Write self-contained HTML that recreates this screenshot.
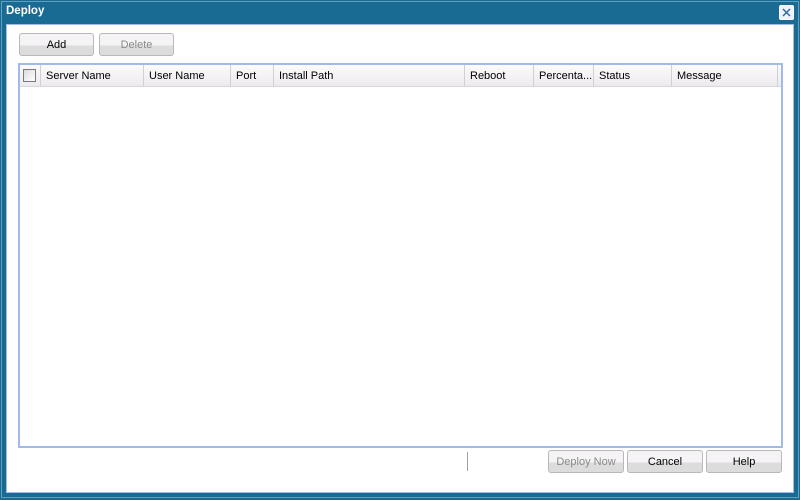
<!DOCTYPE html>
<html><head><style>
*{margin:0;padding:0;box-sizing:border-box}
body{width:800px;height:500px;background:#1a6b93;font-family:"Liberation Sans",sans-serif;font-size:11px;position:relative;overflow:hidden}
.outer{position:absolute;left:1px;top:1px;width:798px;height:497px;border:1px solid #5f9fc0}
.title{position:absolute;left:6px;top:5px;color:#fff;font-weight:bold;font-size:11.5px}
.close{position:absolute;left:779px;top:5px;width:15px;height:15px;background:#eef3fb;border:1px solid #fff;border-radius:2px}
.content{position:absolute;left:6px;top:24px;width:788px;height:469px;background:#fff;border:1px solid #9ebbea}
.btn{position:absolute;height:23px;border:1px solid #b8b8b8;border-radius:3px;background:linear-gradient(#f5f3f5 0 55%,#dcdcdc 55%);text-align:center;line-height:22px;color:#000}
.dis{color:#8a8a8a}
.grid{position:absolute;left:18px;top:63px;width:765px;height:385px;border:2px solid #9ebbea;background:#fff}
.hdr{position:absolute;left:0;top:0;height:22px;width:761px;background:linear-gradient(#fdfbfd,#eceaee);border-bottom:1px solid #d8d8d8}
.col{position:absolute;top:0;height:21px;border-right:1px solid #d0d0d0;line-height:22px;padding-left:5px;white-space:nowrap;overflow:hidden}
.cb{position:absolute;left:3px;top:4px;width:13px;height:13px;border:1px solid #7a7a7a;background:linear-gradient(135deg,#dcdcdc,#fff)}
</style></head><body>
<div class="outer"></div>
<div class="title">Deploy</div>
<div class="close"><svg width="13" height="13" viewBox="0 0 13 13"><path d="M3 3L10 10M10 3L3 10" stroke="#2a63a8" stroke-width="1.4"/></svg></div>
<div class="content"></div>
<div class="btn" style="left:19px;top:33px;width:75px">Add</div>
<div class="btn dis" style="left:99px;top:33px;width:75px">Delete</div>
<div class="grid"><div class="hdr">
<div class="col" style="left:0;width:21px"><div class="cb"></div></div>
<div class="col" style="left:21px;width:103px">Server Name</div>
<div class="col" style="left:124px;width:87px">User Name</div>
<div class="col" style="left:211px;width:43px">Port</div>
<div class="col" style="left:254px;width:191px">Install Path</div>
<div class="col" style="left:445px;width:69px">Reboot</div>
<div class="col" style="left:514px;width:60px">Percenta...</div>
<div class="col" style="left:574px;width:78px">Status</div>
<div class="col" style="left:652px;width:106px">Message</div>
</div></div>
<div style="position:absolute;left:467px;top:452px;width:1px;height:19px;background:#a0a0a0"></div>
<div class="btn dis" style="left:548px;top:450px;width:76px">Deploy Now</div>
<div class="btn" style="left:627px;top:450px;width:76px">Cancel</div>
<div class="btn" style="left:706px;top:450px;width:76px">Help</div>
</body></html>
